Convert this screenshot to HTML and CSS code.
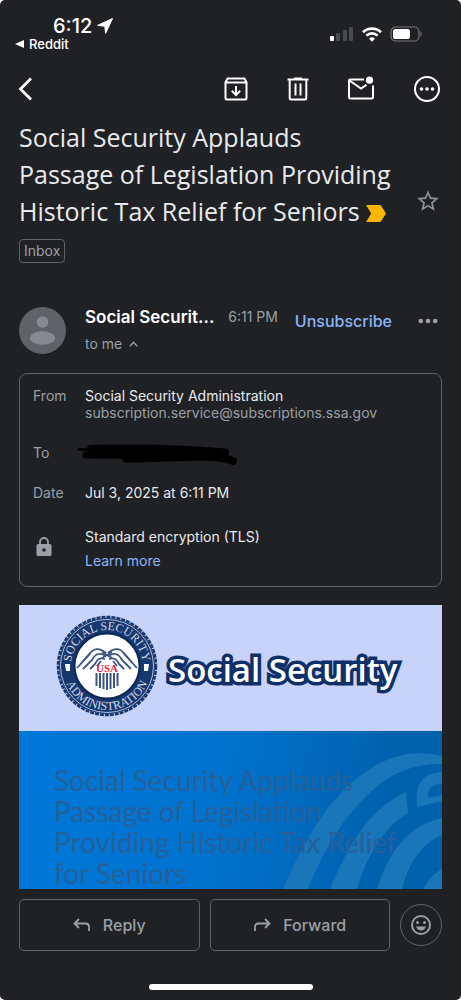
FILE: index.html
```
<!DOCTYPE html>
<html lang="en">
<head>
    <meta charset="UTF-8">
    <meta name="viewport" content="width=device-width, initial-scale=1.0">
    <title>Inbox</title>
    <link rel="stylesheet" href="styles.css">
</head>
<body>

<div class="screen">

    <header class="status-bar">
        <div class="status-left">
            <div class="clock">
                <span>6:12</span>
                <svg width="16" height="16" viewBox="0 0 16 16"><path d="M15.5.5 8.6 15.3 7.8 8.2.6 7.4z" fill="#fff" stroke="#fff" stroke-linejoin="round"/></svg>
            </div>
            <a class="back-app" href="#">
                <svg width="9" height="8" viewBox="0 0 9 8"><path d="M0 4 9 0v8z" fill="#fff"/></svg>
                Reddit
            </a>
        </div>
        <div class="status-right">
            <svg width="24" height="16" viewBox="0 0 24 16">
                <rect x="0" y="10" width="4" height="5" rx="1" fill="#fff"/>
                <rect x="6" y="7" width="4" height="8" rx="1" fill="#4a4b4e"/>
                <rect x="13" y="4" width="4" height="11" rx="1" fill="#4a4b4e"/>
                <rect x="19" y="1" width="4" height="14" rx="1" fill="#4a4b4e"/>
            </svg>
            <svg width="20" height="15" viewBox="0 0 20 15" fill="none" stroke="#fff" stroke-width="2.6">
                <path d="M1 5.2a13 13 0 0 1 18 0"/>
                <path d="M4.4 8.6a8.2 8.2 0 0 1 11.2 0"/>
                <path d="M10 14.8 6.9 11.6a4.6 4.6 0 0 1 6.2 0z" fill="#fff" stroke="none"/>
            </svg>
            <svg width="33" height="16" viewBox="0 0 33 16">
                <rect x="1" y="1" width="28" height="14" rx="4.5" fill="none" stroke="#77787b" stroke-width="1.2"/>
                <rect x="3" y="3" width="17" height="10" rx="2.6" fill="#fff"/>
                <path d="M30.5 5.5v5c1.8-.8 1.8-4.200 0-5z" fill="#77787b"/>
            </svg>
        </div>
    </header>

    <nav class="toolbar">
        <button class="icon-btn back-btn" aria-label="Back">
            <svg width="16" height="24" viewBox="0 0 16 24" fill="none" stroke="#fff" stroke-width="2.8"><path d="M13 1.500 2.500 12 13 22.500"/></svg>
        </button>
        <div class="toolbar-actions">
            <button class="icon-btn" aria-label="Archive">
                <svg width="26" height="26" viewBox="0 0 26 26" fill="none" stroke="#fff" stroke-width="2">
                    <path d="M2.500 6.200 4.600 2.500h16.800l2.100 3.700V22a1.500 1.500 0 0 1-1.500 1.500H4A1.500 1.500 0 0 1 2.500 22zM2.500 6.500h21"/>
                    <path d="M13 10v9M8.800 14.800l4.200 4.200 4.200-4.200"/>
                </svg>
            </button>
            <button class="icon-btn" aria-label="Delete">
                <svg width="26" height="26" viewBox="0 0 26 26" fill="none" stroke="#fff" stroke-width="2">
                    <path d="M2.500 3.500h21M4.700 3.500V22a1.500 1.500 0 0 0 1.500 1.500h13.600a1.500 1.500 0 0 0 1.500-1.500V3.500M9 2.500h8M10.500 7.500v12M15.500 7.500v12"/>
                </svg>
            </button>
            <button class="icon-btn" aria-label="Mark as unread">
                <svg width="28" height="26" viewBox="0 0 28 26" fill="none" stroke="#fff" stroke-width="2">
                    <path d="M17 3.500H3.200A1.200 1.200 0 0 0 2 4.700V21a1.500 1.500 0 0 0 1.500 1.500h21A1.500 1.500 0 0 0 26 21V9.500"/>
                    <path d="M2.500 4.500 14 12.500l5.500-3.600"/>
                    <circle cx="22.500" cy="4.200" r="3.600" fill="#fff" stroke="none"/>
                </svg>
            </button>
            <button class="icon-btn more-btn" aria-label="More options">
                <svg width="28" height="28" viewBox="0 0 28 28" fill="#fff">
                    <circle cx="14" cy="14" r="12" fill="none" stroke="#fff" stroke-width="2"/>
                    <circle cx="8.500" cy="14" r="1.800"/><circle cx="14" cy="14" r="1.800"/><circle cx="19.500" cy="14" r="1.800"/>
                </svg>
            </button>
        </div>
    </nav>

    <main>
        <section class="subject">
            <div class="subject-text">
                <h1>Social Security Applauds<br>Passage of Legislation Providing<br>Historic Tax Relief for Seniors
                    <svg class="important" width="20" height="17" viewBox="0 0 20 17"><path d="M0 0h13.500q1 0 1.600.8L20 8.500l-4.900 7.700q-.6.8-1.600.8H0l5.200-8.500z" fill="#fbb605"/></svg>
                </h1>
                <button class="label">Inbox</button>
            </div>
            <button class="icon-btn star" aria-label="Star">
                <svg width="26" height="26" viewBox="0 0 24 24" fill="#8d8f93"><path d="m22 9.240-7.190-.62L12 2 9.190 8.630 2 9.240l5.460 4.730L5.820 21 12 17.270 18.180 21l-1.630-7.030zM12 15.400l-3.760 2.270 1-4.280-3.320-2.880 4.380-.38L12 6.100l1.710 4.040 4.380.38-3.320 2.880 1 4.280z"/></svg>
            </button>
        </section>

        <section class="sender">
            <svg width="47" height="47" viewBox="0 0 47 47">
                <circle cx="23.500" cy="23.500" r="23.500" fill="#5f6368"/>
                <circle cx="23.500" cy="15" r="5.800" fill="#858a91"/>
                <ellipse cx="23.500" cy="31" rx="12.500" ry="6.800" fill="#858a91"/>
            </svg>
            <div class="sender-info">
                <div class="sender-line">
                    <strong>Social Securit...</strong>
                    <time>6:11 PM</time>
                </div>
                <button class="recipients">to me
                    <svg width="9" height="6" viewBox="0 0 9 6" fill="none" stroke="#9aa0a6" stroke-width="1.400"><path d="M.8 5.200 4.500 1.300l3.700 3.900"/></svg>
                </button>
            </div>
            <a class="unsubscribe" href="#">Unsubscribe</a>
            <button class="icon-btn" aria-label="Message options">
                <svg width="20" height="6" viewBox="0 0 20 6" fill="#a0a2a6"><circle cx="2.800" cy="3" r="2.300"/><circle cx="10" cy="3" r="2.300"/><circle cx="17.200" cy="3" r="2.300"/></svg>
            </button>
        </section>

        <dl class="details">
            <dt>From</dt>
            <dd>Social Security Administration<br><span class="address">subscription.service@subscriptions.ssa.gov</span></dd>
            <dt>To</dt>
            <dd class="redacted">
                <svg width="162" height="24" viewBox="0 0 162 24" fill="none" stroke="#000" stroke-linecap="round">
                    <path d="M2 5.500h14" stroke-width="3"/>
                    <path d="M14 5c40-1 80-1 134 3.500" stroke-width="8"/>
                    <path d="M9 11c50 1 90-1 139-2" stroke-width="7"/>
                    <path d="M49 14.500c35 0 65-3 87-1.500 12 1 18 3 20 4" stroke-width="8"/>
                </svg>
            </dd>
            <dt>Date</dt>
            <dd>Jul 3, 2025 at 6:11 PM</dd>
            <dt class="lock">
                <svg width="16" height="20" viewBox="0 0 16 20" aria-label="Security">
                    <path d="M4 8V5a4 4 0 0 1 8 0v3" fill="none" stroke="#9aa0a6" stroke-width="1.800"/>
                    <path d="M2 7h12q1.500 0 1.500 1.500v9Q15.500 19 14 19H2Q.5 19 .5 17.500v-9Q.5 7 2 7z" fill="#9aa0a6"/>
                    <circle cx="8" cy="13" r="1.800" fill="#202124"/>
                </svg>
            </dt>
            <dd class="security">Standard encryption (TLS)<br><a href="#">Learn more</a></dd>
        </dl>

        <article class="message">
            <div class="brand">
                <svg width="102" height="102" viewBox="0 0 102 102">
                    <defs>
                        <path id="seal-top" d="M51 87a36 36 0 0 1 0-72 36 36 0 0 1 0 72"/>
                        <path id="seal-bottom" d="M51 7a44 44 0 0 0 0 88 44 44 0 0 0 0-88"/>
                        <g id="wing">
                            <path d="M50 38c-7-6-13-5-17 2L21 53M50 41c-7-4-11-2-14 4l-9 9M49 44c-6-2-8 1-10 5l-5 5M34 38l-12 14M45 46l-4 5"/>
                        </g>
                    </defs>
                    <circle cx="51" cy="51" r="48" fill="#17376f"/>
                    <circle cx="51" cy="51" r="49" fill="none" stroke="#17376f" stroke-width="2.500" stroke-dasharray="4 1"/>
                    <circle cx="51" cy="51" r="46.500" fill="none" stroke="#b2bfd8"/>
                    <circle cx="51" cy="51" r="32.500" fill="#fff" stroke="#0d2858" stroke-width="2"/>
                    <g class="seal-text">
                        <text><textPath href="#seal-top" startOffset="50%">SOCIAL SECURITY</textPath></text>
                        <text><textPath href="#seal-bottom" startOffset="50%">ADMINISTRATION</textPath></text>
                    </g>
                    <path d="M9 49h5v7h-4zM93 49h-5v7h4z" fill="#fff"/>
                    <g fill="none" stroke="#3c5583" stroke-width="1.800">
                        <use href="#wing"/>
                        <use href="#wing" transform="matrix(-1 0 0 1 102 0)"/>
                        <path d="m46 37 10 6M56 37l-10 6"/>
                    </g>
                    <path d="M40.500 58v13M44 58v15M47.500 58v16M51 58v17M54.500 58v16M58 58v15M61.500 58v13" stroke="#3c5583" stroke-width="2"/>
                    <text class="seal-usa" x="51" y="57">USA</text>
                </svg>
                <span class="wordmark">Social Security</span>
            </div>
            <div class="hero">
                <svg class="hero-art" width="160" height="158" viewBox="263 0 160 158" fill="#1976b8">
                    <path d="M264 158C286 108 310 66 345 42c25-18 50-24 78-17v8c-26-1-49 8-68 25-30 26-50 60-66 100z"/>
                    <path d="M311 158c17-40 36-78 76-97l2 21c-25 15-41 43-51 76z"/>
                    <path d="M358 158c13-40 32-64 65-71v17c-20 8-33 28-40 54z"/>
                    <path d="M404 158q7-13 19-21v21z"/>
                    <path d="M398 76c-2-22 4-34 25-35v12c-10 0-15 5-14 14l14-3v6z"/>
                </svg>
                <h2>Social Security Applauds<br>Passage of Legislation<br>Providing Historic Tax Relief<br>for Seniors</h2>
            </div>
        </article>
    </main>

    <footer>
        <div class="reply-bar">
            <button class="reply-btn">
                <svg width="18" height="14" viewBox="0 0 18 14" fill="none" stroke="#9aa0a6" stroke-width="1.800"><path d="M6 1 1.500 5.500 6 10M1.500 5.500h11q3.500 0 3.500 3.500v4"/></svg>
                Reply
            </button>
            <button class="reply-btn">
                <svg width="18" height="14" viewBox="0 0 18 14" fill="none" stroke="#9aa0a6" stroke-width="1.800"><path d="m12 1 4.500 4.500L12 10M16.500 5.500h-11Q2 5.500 2 9v4"/></svg>
                Forward
            </button>
            <button class="emoji-btn" aria-label="Add reaction">
                <svg width="22" height="22" viewBox="0 0 22 22" fill="#9aa0a6"><circle cx="11" cy="11" r="9" fill="none" stroke="#9aa0a6" stroke-width="2"/><circle cx="7.500" cy="8.500" r="1.500"/><circle cx="14.500" cy="8.500" r="1.500"/><path d="M6 12.500h10c-.8 2.500-2.700 4-5 4s-4.200-1.500-5-4z"/></svg>
            </button>
        </div>
        <div class="home-indicator"></div>
    </footer>

</div>

</body>
</html>
```
FILE: styles.css
```
:root {
    --bg: #202124;
    --text: #e8eaed;
    --muted: #9aa0a6;
    --border: #5f6368;
    --link: #8ab4f8;
    --navy: #0f2f68;
    --white: #ffffff;
}

* {
    box-sizing: border-box;
}

body {
    margin: 0;
    background-color: var(--white);
    font-family: Inter, "Liberation Sans", sans-serif;
    color: var(--text);
}

button {
    font-family: inherit;
    background: none;
    border: none;
    padding: 0;
    color: var(--muted);
    cursor: pointer;
}

a {
    color: var(--link);
    text-decoration: none;
}

svg {
    display: block;
    flex-shrink: 0;
}

.screen {
    display: flex;
    flex-direction: column;
    min-height: 100vh;
    background-color: var(--bg);
    border-radius: 5px;
}

/* Status bar */
.status-bar {
    display: flex;
    justify-content: space-between;
    padding: 14px 38px 0 15px;
}

.clock {
    display: flex;
    align-items: center;
    gap: 5px;
    padding-left: 38px;
    font-size: 20px;
    font-weight: 500;
    line-height: 24px;
    color: var(--white);
}

.back-app {
    display: flex;
    align-items: center;
    gap: 5px;
    font-size: 13px;
    font-weight: 500;
    line-height: 12px;
    color: var(--white);
}

.status-right {
    display: flex;
    align-items: center;
    gap: 8px;
    height: 40px;
}

/* Toolbar */
.toolbar {
    display: flex;
    justify-content: space-between;
    align-items: center;
    height: 48px;
    margin-top: 11px;
    padding: 0 20px 0 18px;
}

.toolbar-actions {
    display: flex;
    align-items: center;
    gap: 36px;
}

.more-btn {
    margin-left: 2px;
}

main {
    padding: 0 19px;
}

/* Subject */
.subject {
    display: flex;
    justify-content: space-between;
    align-items: center;
    margin-top: 6px;
}

h1 {
    margin: 0;
    font-family: "Open Sans", "Noto Sans", sans-serif;
    font-size: 25px;
    font-weight: 400;
    line-height: 37px;
}

.important {
    display: inline-block;
    vertical-align: -1px;
}

.label {
    display: block;
    margin-top: 9px;
    padding: 0 4px;
    border: 1px solid var(--border);
    border-radius: 4px;
    font-size: 14px;
    line-height: 22px;
}

.star {
    margin: 20px 1px 0 0;
}

/* Sender */
.sender {
    display: flex;
    align-items: flex-start;
    margin-top: 44px;
}

.sender-info {
    flex: 1;
    margin-left: 19px;
}

.sender-line {
    display: flex;
    align-items: center;
    gap: 14px;
    line-height: 20px;
    white-space: nowrap;
}

.sender-line strong {
    font-size: 17px;
    font-weight: 600;
    color: var(--white);
}

.sender-line time {
    font-size: 14px;
    color: var(--muted);
}

.recipients {
    display: flex;
    align-items: center;
    gap: 7px;
    margin-top: 8px;
    font-size: 14px;
    line-height: 18px;
}

.unsubscribe {
    font-size: 16px;
    font-weight: 500;
    line-height: 28px;
}

.sender .icon-btn {
    margin: 11px 4px 0 26px;
}

/* Message details */
.details {
    display: grid;
    grid-template-columns: 52px 1fr;
    margin: 19px 0 0;
    padding: 13px;
    border: 1px solid var(--border);
    border-radius: 8px;
    font-size: 14px;
    line-height: 17px;
}

.details dt {
    color: var(--muted);
}

.details dd {
    margin: 0 0 23px;
}

.address {
    color: var(--muted);
}

.details .redacted {
    height: 17px;
    margin-left: -8px;
}

.lock {
    padding: 13px 0 0 3px;
}

.details .security {
    margin: 0;
    padding-top: 1px;
    line-height: 24px;
}

/* Message body */
.message {
    margin-top: 18px;
}

.brand {
    display: flex;
    align-items: center;
    gap: 10px;
    height: 126px;
    padding: 0 0 4px 37px;
    background-color: #c7d3f8;
}

.seal-text {
    font-family: "Liberation Serif", serif;
    font-size: 12px;
    fill: #d3dbea;
    text-anchor: middle;
}

.seal-usa {
    font-family: "Liberation Serif", serif;
    font-size: 11px;
    font-weight: bold;
    fill: #e0263c;
    text-anchor: middle;
}

.wordmark {
    padding-top: 6px;
    font-family: "Open Sans", "Noto Sans", sans-serif;
    font-size: 33px;
    font-weight: 600;
    color: var(--white);
    white-space: nowrap;
    -webkit-text-stroke: 7px var(--navy);
    paint-order: stroke fill;
}

.hero {
    position: relative;
    padding: 34px 0 0 35px;
    background: linear-gradient(100deg, #0078da, #0073cf 45%, #0061ad 85%);
    overflow: hidden;
}

/* arcs sit behind the headline */
.hero-art {
    position: absolute;
    right: 0;
    bottom: 0;
}

.hero h2 {
    position: relative;
    margin: 0;
    font-family: Lato, sans-serif;
    font-size: 28px;
    font-weight: 400;
    line-height: 31px;
    color: #26609a;
    white-space: nowrap;
}

/* Reply bar */
.reply-bar {
    display: flex;
    align-items: center;
    gap: 10px;
    padding: 10px 19px 0;
}

.reply-btn {
    display: flex;
    flex: 1;
    align-items: center;
    justify-content: center;
    gap: 12px;
    height: 52px;
    border: 1px solid var(--border);
    border-radius: 5px;
    font-size: 16px;
    font-weight: 500;
}

.emoji-btn {
    display: flex;
    align-items: center;
    justify-content: center;
    width: 42px;
    height: 42px;
    border: 1px solid var(--border);
    border-radius: 50%;
}

.home-indicator {
    width: 164px;
    height: 6px;
    margin: 33px auto 10px;
    background-color: var(--white);
    border-radius: 3px;
}
```
